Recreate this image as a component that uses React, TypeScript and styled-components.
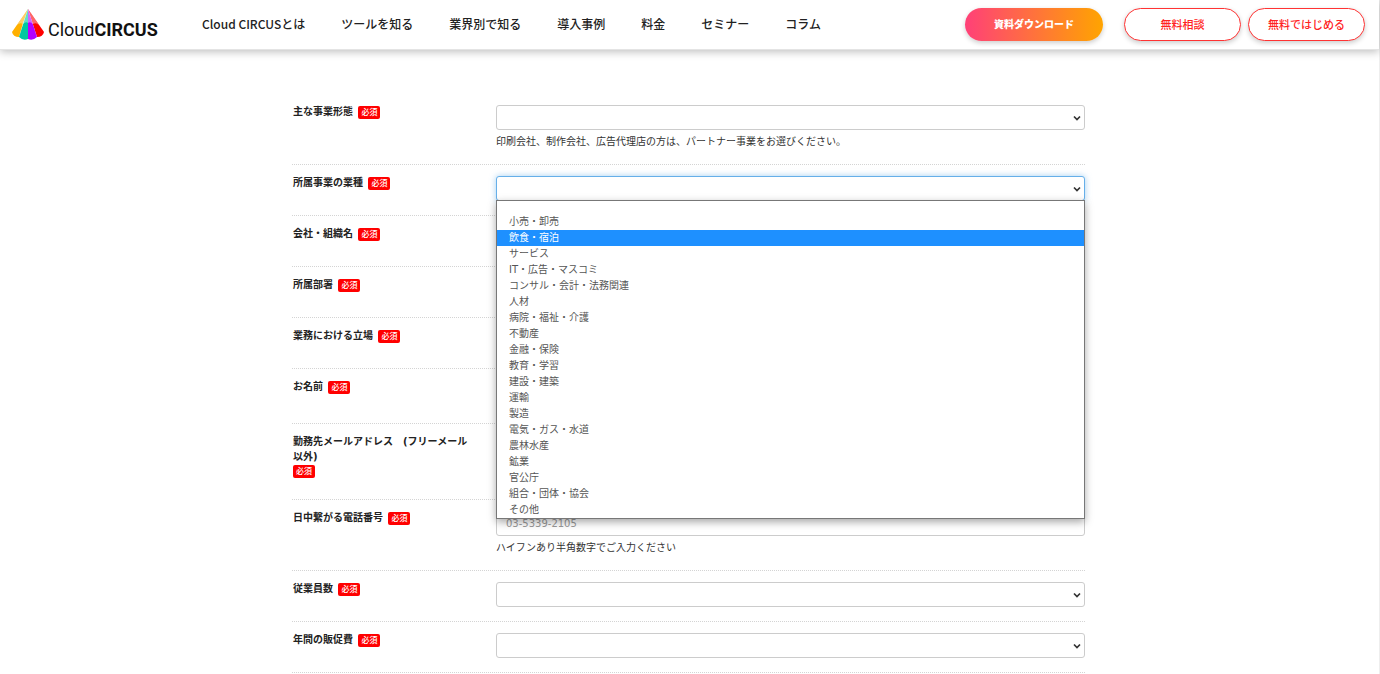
import React from "react";
import styled, { createGlobalStyle, css } from "styled-components";

const GlobalStyle = createGlobalStyle`
  *, *::before, *::after { box-sizing: border-box; }
  body {
    margin: 0;
    background: #fff;
    color: #333;
    font-family: "DejaVu Sans", "Noto Sans CJK JP", sans-serif;
    font-size: 10px;
    line-height: 15px;
  }
`;

const Page = styled.div`
  border-right: 1px solid #eee;
  min-height: 100vh;
`;

const Header = styled.header`
  display: flex;
  align-items: center;
  height: 50px;
  padding: 0 14px 0 12px;
  background: #fff;
  border-bottom: 1px solid #e4e4e4;
  box-shadow: 0 2px 8px rgba(0, 0, 0, 0.25);
  font-family: "Noto Sans CJK JP", sans-serif;
`;

const Logo = styled.a`
  display: flex;
  align-items: flex-end;
  gap: 4px;
  width: 190px;
  flex: none;
  color: #111;
  text-decoration: none;
  font: 400 18px/22px Roboto, sans-serif;
  svg { flex: none; }
  strong { font-weight: 700; }
`;

const Nav = styled.nav`
  display: flex;
  gap: 36px;
  flex: 1;
  padding-bottom: 2px;
`;

const NavLink = styled.a`
  color: #222;
  font-size: 12px;
  font-weight: 500;
  line-height: 18px;
  white-space: nowrap;
  text-decoration: none;
`;

const Actions = styled.div`
  display: flex;
  gap: 7px;
`;

const PillButton = styled.button<{ $primary?: boolean }>`
  height: 33px;
  width: 117px;
  padding: 0 0 2px;
  border: 1px solid #f33;
  border-radius: 17px;
  background: #fff;
  color: #f22;
  font: 500 11px/16px "Noto Sans CJK JP", sans-serif;
  white-space: nowrap;
  box-shadow: 0 2px 5px rgba(0, 0, 0, 0.2);
  ${(p) =>
    p.$primary &&
    css`
      width: 138px;
      margin-right: 14px;
      border: 0;
      background: linear-gradient(90deg, #ff4078, #ffa400);
      color: #fff;
      font-size: 10px;
      font-weight: 900;
    `}
`;

const Form = styled.form`
  max-width: 793px;
  margin: 0 auto;
  padding-top: 44px;
`;

const FormArea = styled.main`
  padding-right: 2px;
`;

const Row = styled.div<{ $minHeight?: number }>`
  display: grid;
  grid-template-columns: 180px 1fr;
  column-gap: 24px;
  align-items: start;
  min-height: ${(p) => p.$minHeight ?? 51}px;
  padding: 10px 0 14px;
  border-bottom: 1px dotted #d4d4d4;
`;

const Label = styled.label`
  padding-left: 1px;
  color: #222;
  font-weight: 700;
`;

const Badge = styled.span<{ $ownLine?: boolean }>`
  display: ${(p) => (p.$ownLine ? "block" : "inline-block")};
  width: 22px;
  height: 13px;
  margin-left: ${(p) => (p.$ownLine ? 0 : 2)}px;
  margin-top: ${(p) => (p.$ownLine ? 1 : 0)}px;
  border-radius: 2px;
  background: #f00;
  color: #fff;
  font-size: 8px;
  font-weight: 500;
  line-height: 13px;
  text-align: center;
  vertical-align: middle;
`;

const Field = styled.div`
  position: relative;
  padding-top: 1px;
`;

const control = css`
  display: block;
  width: 100%;
  height: 25px;
  border: 1px solid #ccc;
  border-radius: 3px;
  background-color: #fff;
  color: #555;
  font: inherit;
`;

const SelectBox = styled.div`
  position: relative;
  svg {
    position: absolute;
    right: 4px;
    top: 9px;
    pointer-events: none;
  }
`;

const Select = styled.select<{ $open?: boolean }>`
  ${control}
  appearance: none;
  padding: 0 20px 0 8px;
  outline: none;
  ${(p) =>
    p.$open &&
    css`
      border-color: #66afe9;
      box-shadow: 0 0 6px rgba(102, 175, 233, 0.6);
    `}
`;

const Input = styled.input`
  ${control}
  padding: 0 9px;
  &::placeholder { color: #999; opacity: 1; }
`;

const Help = styled.p`
  margin: 4px 0 0;
  padding-bottom: 1px;
`;

const OptionList = styled.ul`
  position: absolute;
  z-index: 2;
  top: 25px;
  left: 0;
  right: 0;
  margin: 0;
  padding: 13px 0 0;
  list-style: none;
  background: #fff;
  border: 1px solid #777;
  box-shadow: 0 3px 8px rgba(0, 0, 0, 0.35);
`;

const Option = styled.li<{ $active?: boolean }>`
  height: 16px;
  padding-left: 12px;
  line-height: 16px;
  color: ${(p) => (p.$active ? "#fff" : "#555")};
  background: ${(p) => (p.$active ? "#1e90ff" : "transparent")};
`;

const navItems = ["Cloud CIRCUSとは", "ツールを知る", "業界別で知る", "導入事例", "料金", "セミナー", "コラム"];

const industries = [
  "小売・卸売", "飲食・宿泊", "サービス", "IT・広告・マスコミ", "コンサル・会計・法務関連", "人材",
  "病院・福祉・介護", "不動産", "金融・保険", "教育・学習", "建設・建築", "運輸", "製造",
  "電気・ガス・水道", "農林水産", "鉱業", "官公庁", "組合・団体・協会", "その他",
];

type FieldDef = {
  id: string;
  label: string;
  kind: "select" | "text";
  help?: string;
  placeholder?: string;
  options?: string[];
  minHeight?: number;
  badgeBelow?: boolean;
};

const fields: FieldDef[] = [
  { id: "business", label: "主な事業形態", kind: "select", help: "印刷会社、制作会社、広告代理店の方は、パートナー事業をお選びください。" },
  { id: "industry", label: "所属事業の業種", kind: "select", options: industries },
  { id: "company", label: "会社・組織名", kind: "text" },
  { id: "department", label: "所属部署", kind: "text" },
  { id: "position", label: "業務における立場", kind: "select" },
  { id: "name", label: "お名前", kind: "text", minHeight: 55 },
  { id: "email", label: "勤務先メールアドレス　(フリーメール以外)", kind: "text", minHeight: 76, badgeBelow: true },
  { id: "tel", label: "日中繋がる電話番号", kind: "text", placeholder: "03-5339-2105", help: "ハイフンあり半角数字でご入力ください" },
  { id: "employees", label: "従業員数", kind: "select" },
  { id: "budget", label: "年間の販促費", kind: "select" },
];

const LogoMark = () => (
  <svg width="32" height="32" viewBox="0 0 32 32" aria-hidden="true">
    <path d="M16 0 L0 23 Q1 28 7 28 L11 14Z" fill="#ffb000" />
    <path d="M16 0 L25 28 Q31 28 32 23Z" fill="#f00" />
    <path d="M16 0 L7 28 Q11 32 16 30Z" fill="#00c8a0" />
    <path d="M16 0 L16 30 Q21 32 25 28Z" fill="#b400ff" />
    <path d="M16 0 L5 16 Q8 13 11 15 Q14 12 16 14 Q18 12 21 15 Q24 13 27 16Z" fill="#fff" opacity="0.4" />
  </svg>
);

const SelectField = ({ field }: { field: FieldDef }) => (
  <>
    <SelectBox>
      <Select id={field.id} $open={!!field.options} defaultValue="">
        <option value="" aria-label="未選択" />
        {field.options?.map((o) => <option key={o}>{o}</option>)}
      </Select>
      <svg width="8" height="8" viewBox="0 0 8 8" aria-hidden="true">
        <path d="M1 2.500 L4 5.500 L7 2.500" fill="none" stroke="#333" strokeWidth="1.700" />
      </svg>
    </SelectBox>
    {field.options && (
      <OptionList role="listbox" aria-label={field.label}>
        {field.options.map((o) => (
          <Option key={o} role="option" aria-selected={o === "飲食・宿泊"} $active={o === "飲食・宿泊"}>
            {o}
          </Option>
        ))}
      </OptionList>
    )}
  </>
);

export default function App() {
  return (
    <Page>
      <GlobalStyle />
      <Header>
        <Logo href="#" aria-label="CloudCIRCUS">
          <LogoMark />
          <span>Cloud<strong>CIRCUS</strong></span>
        </Logo>
        <Nav>
          {navItems.map((item) => <NavLink key={item} href="#">{item}</NavLink>)}
        </Nav>
        <Actions>
          <PillButton type="button" $primary>資料ダウンロード</PillButton>
          <PillButton type="button">無料相談</PillButton>
          <PillButton type="button">無料ではじめる</PillButton>
        </Actions>
      </Header>
      <FormArea>
        <Form>
          {fields.map((f) => (
            <Row key={f.id} $minHeight={f.minHeight}>
              <Label htmlFor={f.id}>
                {f.label} <Badge $ownLine={f.badgeBelow}>必須</Badge>
              </Label>
              <Field>
                {f.kind === "select" ? <SelectField field={f} /> : <Input id={f.id} type="text" placeholder={f.placeholder} />}
                {f.help && <Help>{f.help}</Help>}
              </Field>
            </Row>
          ))}
        </Form>
      </FormArea>
    </Page>
  );
}
